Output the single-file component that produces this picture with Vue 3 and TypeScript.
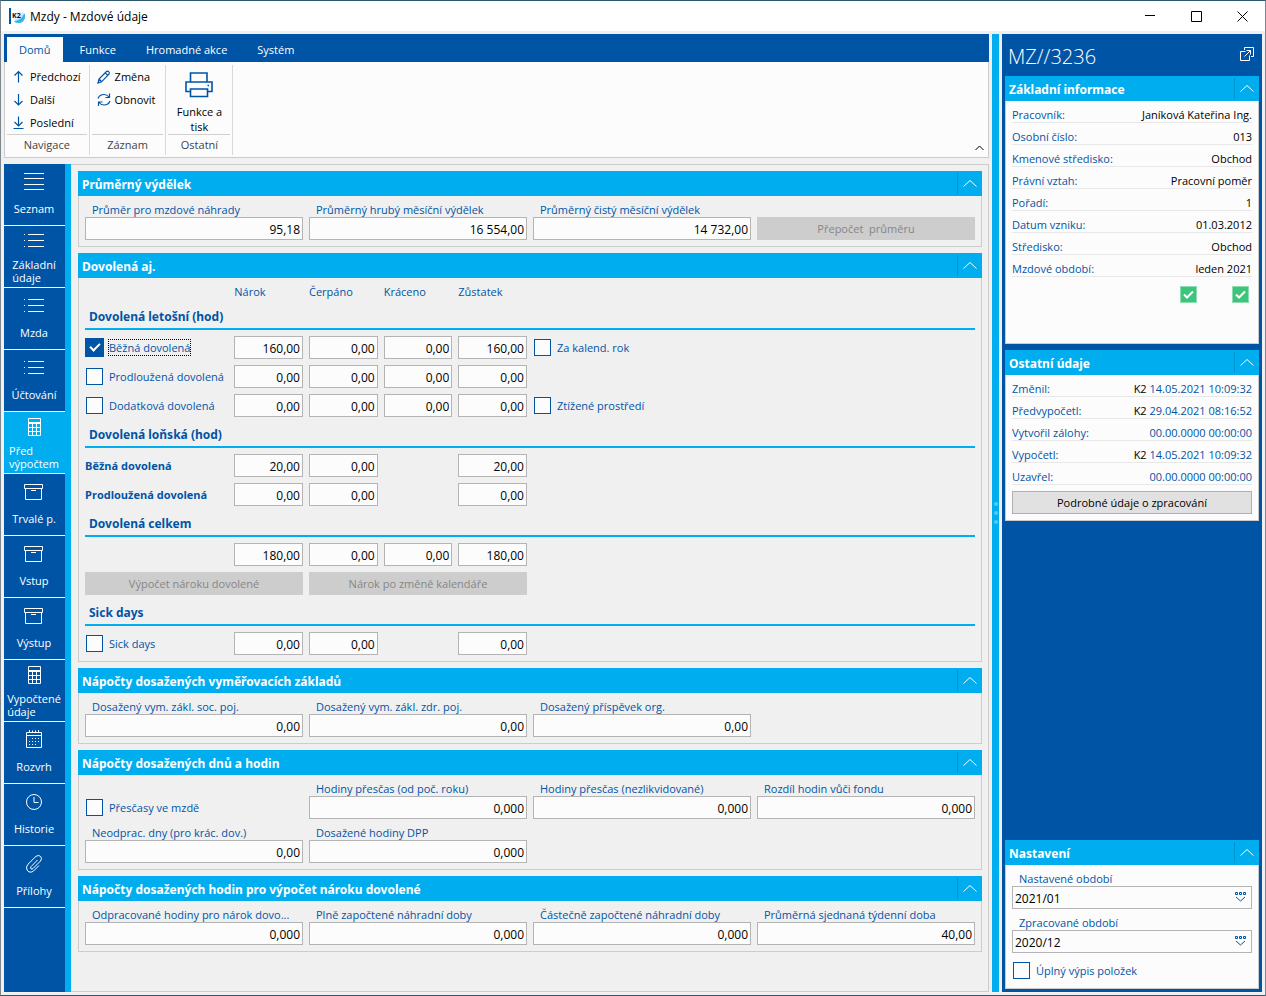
<script setup lang="ts">
import { ref } from 'vue'

interface Field { id: string; label: string; value: string }
interface Row {
  kind: 'heading' | 'values' | 'buttons'
  id: string
  label?: string
  check?: boolean
  checked?: boolean
  focused?: boolean
  values?: (string | null)[]
  extra?: string
  buttons?: string[]
}

const tabs = ['Domů', 'Funkce', 'Hromadné akce', 'Systém']

const navActions = [
  { label: 'Předchozí', icon: 'M6.5 12.5V1.5M2.5 5.5L6.5 1.5L10.5 5.5' },
  { label: 'Další', icon: 'M6.5 1V12M2.5 8L6.5 12L10.5 8' },
  { label: 'Poslední', icon: 'M6.5 0.5V9.5M2.5 6L6.5 10L10.5 6M1.5 12.5H11.5' },
]
const recordActions = [
  { label: 'Změna', icon: 'M1 13L2 9L9.5 1.5Q10.5 0.5 11.7 1.7T12 4.2L4.5 11.8ZM8.2 2.8L11 5.6M2 9L4.8 11.8' },
  { label: 'Obnovit', icon: 'M1 5.5Q2.5 1.5 7 1.5Q10 1.5 12 4M12.5 0.5V4.5H8.5M13 8Q11.5 12 7 12Q4 12 2 9.5M1.5 13V9H5.5' },
]

const icons: Record<string, string> = {
  lines: 'M0 1.5H20M0 6.5H20M0 12.5H20M0 17.5H20',
  list: 'M0 3.5H1M4 3.5H20M0 9.5H1M4 9.5H20M0 15.5H1M4 15.5H20',
  calc: 'M4.5 1.5H16.5V18.5H4.5ZM4.5 5.5H16.5M4.5 6.5H16.5M8.5 6.5V18.5M12.5 6.5V18.5M4.5 10.5H16.5M4.5 14.5H16.5',
  box: 'M0.5 2.5H18.5V6.5H0.5ZM1.5 6.5V17.5H17.5V6.5M7 8.5H12',
  calendar: 'M2.5 2.5H17.5V17.5H2.5ZM2.5 5.5H17.5M5.5 0V3M14.5 0V3M8.5 0.5V3M11.5 0.5V3M8 8.5H9M11 8.5H12M14 8.5H15M5 11.5H6M8 11.5H9M11 11.5H12M14 11.5H15M5 14.5H6M8 14.5H9M11 14.5H12',
  clock: 'M17.5 10A7.5 7.5 0 1 1 2.5 10A7.5 7.5 0 1 1 17.5 10M10 5V10.5H14.5',
  clip: 'M13.5 6L7 12.7Q6 14 7 14.8T9 14.5L16.5 7Q18.5 4.5 16.7 2.5T12 2.3L4 10.2Q1.5 13 3 16T7.8 18L9.5 17L15 11.5',
}

const sections = [
  { label: 'Seznam', icon: 'lines' },
  { label: 'Základní údaje', icon: 'list', tall: true },
  { label: 'Mzda', icon: 'list' },
  { label: 'Účtování', icon: 'list' },
  { label: 'Před výpočtem', icon: 'calc', tall: true, active: true },
  { label: 'Trvalé p.', icon: 'box' },
  { label: 'Vstup', icon: 'box' },
  { label: 'Výstup', icon: 'box' },
  { label: 'Vypočtené údaje', icon: 'calc', tall: true },
  { label: 'Rozvrh', icon: 'calendar' },
  { label: 'Historie', icon: 'clock' },
  { label: 'Přílohy', icon: 'clip' },
]

const averages: Field[] = [
  { id: 'avg-wage', label: 'Průměr pro mzdové náhrady', value: '95,18' },
  { id: 'avg-gross', label: 'Průměrný hrubý měsíční výdělek', value: '16 554,00' },
  { id: 'avg-net', label: 'Průměrný čistý měsíční výdělek', value: '14 732,00' },
]

const columns = ['Nárok', 'Čerpáno', 'Kráceno', 'Zůstatek']

const leave = ref<Row[]>([
  { kind: 'heading', id: 'h-now', label: 'Dovolená letošní (hod)' },
  { kind: 'values', id: 'now-regular', label: 'Běžná dovolená', check: true, checked: true, focused: true, values: ['160,00', '0,00', '0,00', '160,00'], extra: 'Za kalend. rok' },
  { kind: 'values', id: 'now-extended', label: 'Prodloužená dovolená', check: true, values: ['0,00', '0,00', '0,00', '0,00'] },
  { kind: 'values', id: 'now-additional', label: 'Dodatková dovolená', check: true, values: ['0,00', '0,00', '0,00', '0,00'], extra: 'Ztížené prostředí' },
  { kind: 'heading', id: 'h-last', label: 'Dovolená loňská (hod)' },
  { kind: 'values', id: 'last-regular', label: 'Běžná dovolená', values: ['20,00', '0,00', null, '20,00'] },
  { kind: 'values', id: 'last-extended', label: 'Prodloužená dovolená', values: ['0,00', '0,00', null, '0,00'] },
  { kind: 'heading', id: 'h-total', label: 'Dovolená celkem' },
  { kind: 'values', id: 'total', label: '', values: ['180,00', '0,00', '0,00', '180,00'] },
  { kind: 'buttons', id: 'leave-actions', buttons: ['Výpočet nároku dovolené', 'Nárok po změně kalendáře'] },
  { kind: 'heading', id: 'h-sick', label: 'Sick days' },
  { kind: 'values', id: 'sick', label: 'Sick days', check: true, values: ['0,00', '0,00', null, '0,00'] },
])

const bases: Field[] = [
  { id: 'base-social', label: 'Dosažený vym. zákl. soc. poj.', value: '0,00' },
  { id: 'base-health', label: 'Dosažený vym. zákl. zdr. poj.', value: '0,00' },
  { id: 'base-org', label: 'Dosažený příspěvek org.', value: '0,00' },
]
const hours: Field[] = [
  { id: 'ot-year', label: 'Hodiny přesčas (od poč. roku)', value: '0,000' },
  { id: 'ot-open', label: 'Hodiny přesčas (nezlikvidované)', value: '0,000' },
  { id: 'fund-diff', label: 'Rozdíl hodin vůči fondu', value: '0,000' },
  { id: 'missed', label: 'Neodprac. dny (pro krác. dov.)', value: '0,00' },
  { id: 'dpp', label: 'Dosažené hodiny DPP', value: '0,000' },
]
const entitlement: Field[] = [
  { id: 'worked', label: 'Odpracované hodiny pro nárok dovo...', value: '0,000' },
  { id: 'full-sub', label: 'Plně započtené náhradní doby', value: '0,000' },
  { id: 'part-sub', label: 'Částečně započtené náhradní doby', value: '0,000' },
  { id: 'weekly', label: 'Průměrná sjednaná týdenní doba', value: '40,00' },
]

const basicInfo = [
  ['Pracovník:', 'Janíková Kateřina Ing.'],
  ['Osobní číslo:', '013'],
  ['Kmenové středisko:', 'Obchod'],
  ['Právní vztah:', 'Pracovní poměr'],
  ['Pořadí:', '1'],
  ['Datum vzniku:', '01.03.2012'],
  ['Středisko:', 'Obchod'],
  ['Mzdové období:', 'leden 2021'],
]
const otherInfo = [
  ['Změnil:', 'K2', '14.05.2021 10:09:32'],
  ['Předvypočetl:', 'K2', '29.04.2021 08:16:52'],
  ['Vytvořil zálohy:', '', '00.00.0000 00:00:00'],
  ['Vypočetl:', 'K2', '14.05.2021 10:09:32'],
  ['Uzavřel:', '', '00.00.0000 00:00:00'],
]
const periods = [
  { id: 'period-set', label: 'Nastavené období', value: '2021/01' },
  { id: 'period-done', label: 'Zpracované období', value: '2020/12' },
]
const chevron = 'M0.5 7.5L7 1.5L13.5 7.5'
</script>

<template>
  <div class="window">
    <header class="titlebar">
      <svg class="logo" width="17" height="16" viewBox="0 0 17 16">
        <defs>
          <linearGradient id="orb" x1="0" y1="0" x2="1" y2="1">
            <stop offset="0" stop-color="#ffffff" />
            <stop offset="0.5" stop-color="#d9eefa" />
            <stop offset="1" stop-color="#1593dc" />
          </linearGradient>
        </defs>
        <rect width="2" height="16" fill="#0054a6" />
        <circle cx="10" cy="9" r="6" fill="url(#orb)" />
        <path d="M15.500 5Q17.500 11 12 14.500Q7 16 5 13Q12.500 13 15.500 5Z" fill="#35b5ea" />
        <text x="3" y="10" class="logo-text">K2</text>
      </svg>
      <h1>Mzdy - Mzdové údaje</h1>
      <div class="controls">
        <button type="button" aria-label="Minimalizovat"><svg width="11" height="11"><path d="M0 4.500H10" /></svg></button>
        <button type="button" aria-label="Maximalizovat"><svg width="11" height="11"><path d="M0.500 0.500H10.500V10.500H0.500Z" /></svg></button>
        <button type="button" aria-label="Zavřít"><svg width="11" height="11"><path d="M0.500 0.500L10.500 10.500M10.500 0.500L0.500 10.500" /></svg></button>
      </div>
    </header>

    <div class="workspace">
      <div class="left">
        <nav class="tabs">
          <button v-for="(t, i) in tabs" :key="t" type="button" :class="{ active: i === 0 }">{{ t }}</button>
        </nav>
        <div class="ribbon">
          <div class="group">
            <div class="actions">
              <button v-for="a in navActions" :key="a.label" type="button" class="action">
                <svg width="14" height="14" viewBox="0 0 14 14"><path :d="a.icon" /></svg>{{ a.label }}
              </button>
            </div>
            <div class="caption">Navigace</div>
          </div>
          <div class="group">
            <div class="actions wide">
              <button v-for="a in recordActions" :key="a.label" type="button" class="action">
                <svg width="14" height="14" viewBox="0 0 14 14"><path :d="a.icon" /></svg>{{ a.label }}
              </button>
            </div>
            <div class="caption">Záznam</div>
          </div>
          <div class="group">
            <button type="button" class="big-action">
              <svg width="28" height="26" viewBox="0 0 28 26">
                <path d="M5.500 10V1H22V10M5.500 19.500H1V10H27V19.500H22.500M5.500 17H22.500V24.500H5.500Z" />
                <path d="M22.500 13.500H24" />
              </svg>
              <span>Funkce a tisk</span>
            </button>
            <div class="caption">Ostatní</div>
          </div>
          <button type="button" class="fold" aria-label="Sbalit pás">
            <svg width="9" height="6"><path d="M0.500 5L4.500 1L8.500 5" /></svg>
          </button>
        </div>

        <div class="body">
          <nav class="sidebar">
            <button v-for="s in sections" :key="s.label" type="button" :class="{ tall: s.tall, active: s.active }">
              <svg width="20" height="20" viewBox="0 0 20 20"><path :d="icons[s.icon]" /></svg>
              <span>{{ s.label }}</span>
            </button>
          </nav>

          <main class="content">
            <section class="panel">
              <header><h2>Průměrný výdělek</h2><button type="button" aria-label="Sbalit"><svg width="14" height="9"><path :d="chevron" /></svg></button></header>
              <div class="quarters">
                <div v-for="f in averages" :key="f.id" class="field">
                  <label :for="f.id">{{ f.label }}</label><input :id="f.id" type="text" :value="f.value">
                </div>
                <button type="button" class="command" disabled>Přepočet&nbsp; průměru</button>
              </div>
            </section>

            <section class="panel">
              <header><h2>Dovolená aj.</h2><button type="button" aria-label="Sbalit"><svg width="14" height="9"><path :d="chevron" /></svg></button></header>
              <div class="leave">
                <div class="row titles">
                  <span class="lead"></span>
                  <span v-for="c in columns" :key="c">{{ c }}</span>
                </div>
                <template v-for="r in leave" :key="r.id">
                  <h3 v-if="r.kind === 'heading'">{{ r.label }}</h3>
                  <div v-else-if="r.kind === 'buttons'" class="row">
                    <button v-for="b in r.buttons" :key="b" type="button" class="command third" disabled>{{ b }}</button>
                  </div>
                  <div v-else class="row">
                    <label v-if="r.check" class="lead tick">
                      <input v-model="r.checked" type="checkbox"><span :class="{ focused: r.focused }">{{ r.label }}</span>
                    </label>
                    <strong v-else class="lead">{{ r.label }}</strong>
                    <template v-for="(v, i) in r.values" :key="i">
                      <span v-if="v === null"></span>
                      <input v-else type="text" :value="v" :aria-label="(r.label || 'Dovolená celkem') + ' – ' + columns[i]">
                    </template>
                    <label v-if="r.extra" class="tick third"><input type="checkbox"><span>{{ r.extra }}</span></label>
                  </div>
                </template>
              </div>
            </section>

            <section class="panel">
              <header><h2>Nápočty dosažených vyměřovacích základů</h2><button type="button" aria-label="Sbalit"><svg width="14" height="9"><path :d="chevron" /></svg></button></header>
              <div class="quarters">
                <div v-for="f in bases" :key="f.id" class="field">
                  <label :for="f.id">{{ f.label }}</label><input :id="f.id" type="text" :value="f.value">
                </div>
              </div>
            </section>

            <section class="panel">
              <header><h2>Nápočty dosažených dnů a hodin</h2><button type="button" aria-label="Sbalit"><svg width="14" height="9"><path :d="chevron" /></svg></button></header>
              <div class="quarters">
                <label class="tick"><input type="checkbox"><span>Přesčasy ve mzdě</span></label>
                <div v-for="f in hours" :key="f.id" class="field">
                  <label :for="f.id">{{ f.label }}</label><input :id="f.id" type="text" :value="f.value">
                </div>
              </div>
            </section>

            <section class="panel">
              <header><h2>Nápočty dosažených hodin pro výpočet nároku dovolené</h2><button type="button" aria-label="Sbalit"><svg width="14" height="9"><path :d="chevron" /></svg></button></header>
              <div class="quarters">
                <div v-for="f in entitlement" :key="f.id" class="field">
                  <label :for="f.id">{{ f.label }}</label><input :id="f.id" type="text" :value="f.value">
                </div>
              </div>
            </section>
          </main>
        </div>
      </div>

      <div class="splitter"><i></i><i></i><i></i></div>

      <aside class="detail">
        <div class="record">
          <h2>MZ//3236</h2>
          <button type="button" aria-label="Otevřít v okně">
            <svg width="14" height="14" viewBox="0 0 14 14"><path d="M4.500 3V0.500H13.500V9.500H11M5.500 4.500H0.500V13.500H9.500V8.500M4.500 9.500L10.500 3.500M6.500 3.500H10.500V7.500" /></svg>
          </button>
        </div>
        <section class="panel basic">
          <header><h2>Základní informace</h2><button type="button" aria-label="Sbalit"><svg width="14" height="9"><path :d="chevron" /></svg></button></header>
          <dl>
            <div v-for="r in basicInfo" :key="r[0]"><dt>{{ r[0] }}</dt><dd>{{ r[1] }}</dd></div>
          </dl>
          <div class="flags">
            <svg v-for="n in 2" :key="n" width="17" height="17" viewBox="0 0 17 17"><rect x="0.500" y="0.500" width="16" height="16" /><path d="M4 8.500L7 11.500L13 5.500" /></svg>
          </div>
        </section>
        <section class="panel">
          <header><h2>Ostatní údaje</h2><button type="button" aria-label="Sbalit"><svg width="14" height="9"><path :d="chevron" /></svg></button></header>
          <dl>
            <div v-for="r in otherInfo" :key="r[0]"><dt>{{ r[0] }}</dt><dd>{{ r[1] }} <time>{{ r[2] }}</time></dd></div>
          </dl>
          <button type="button" class="more">Podrobné údaje o zpracování</button>
        </section>
        <section class="panel settings">
          <header><h2>Nastavení</h2><button type="button" aria-label="Sbalit"><svg width="14" height="9"><path :d="chevron" /></svg></button></header>
          <div class="stack">
            <div v-for="p in periods" :key="p.id" class="field">
              <label :for="p.id">{{ p.label }}</label>
              <div class="picker">
                <select :id="p.id"><option>{{ p.value }}</option></select>
                <svg width="12" height="10" viewBox="0 0 12 10"><path d="M0.500 0.500H2.500V2.500H0.500ZM4.500 0.500H6.500V2.500H4.500ZM8.500 0.500H10.500V2.500H8.500ZM1 5L5.500 9L10 5" /></svg>
              </div>
            </div>
            <label class="tick"><input type="checkbox"><span>Úplný výpis položek</span></label>
          </div>
        </section>
      </aside>
    </div>
  </div>
</template>

<style>
body { margin: 0; }
</style>

<style scoped>
.window {
  --blue: #0054a6;
  --cyan: #00adef;
  --line: #cccccc;
  box-sizing: border-box;
  min-height: 100vh;
  display: flex;
  flex-direction: column;
  border: 1px solid #7d868b;
  border-top-color: #2b566b;
  border-bottom-color: #2b566b;
  background: #f0f0f0;
  color: #000;
  font-family: "Open Sans", "Noto Sans", sans-serif;
  font-size: 12px;
  line-height: 15px;
}
.window *, .window *::after { box-sizing: border-box; }
h1, h2, h3, dl, dd { margin: 0; font-size: inherit; font-weight: inherit; }
button, input, select { font: inherit; color: inherit; margin: 0; padding: 0; border: 0; border-radius: 0; background: none; }
svg { display: block; flex: none; fill: none; stroke: currentColor; }

.titlebar { height: 30px; display: flex; align-items: center; padding-left: 8px; gap: 4px; background: #fff; }
.logo { stroke: none; }
.logo-text { font: bold 7px "Open Sans", sans-serif; fill: #111; stroke: none; }
.controls { margin-left: auto; display: flex; }
.controls button { width: 46px; height: 28px; display: grid; place-items: center; }

.workspace { flex: 1; display: flex; padding: 3px; }
.left { flex: 1; min-width: 0; display: flex; flex-direction: column; }
.tabs { height: 28px; display: flex; padding: 3px 3px 0; background: var(--blue); }
.tabs button { padding: 0 15px; color: #fff; font-size: 11px; }
.tabs button.active { margin-right: 2px; padding: 0 12px; background: #fcfcfc; color: var(--blue); }
.ribbon { display: flex; height: 96px; padding: 3px 0 2px 2px; border: 1px solid var(--line); border-top: 0; background: #fcfcfc; }
.group { display: flex; flex-direction: column; padding-right: 2px; margin-right: 2px; border-right: 1px solid #d8d8d8; }
.actions { display: flex; flex-direction: column; padding: 0 6px 0 5px; flex: 1; }
.actions.wide { padding-right: 8px; }
.action { height: 23px; display: flex; align-items: center; gap: 4px; white-space: nowrap; font-size: 11px; }
.action svg { color: var(--blue); stroke-width: 1.2; }
.big-action svg { color: var(--blue); stroke-width: 1.6; }
.big-action { flex: 1; width: 62px; display: flex; flex-direction: column; align-items: center; gap: 6px; padding-top: 7px; font-size: 11px; }
.big-action span { width: 52px; }
.caption { height: 21px; border-top: 1px solid #d0d0d0; text-align: center; line-height: 20px; font-size: 11px; color: #444; }
.fold { align-self: flex-end; margin-left: auto; padding: 4px; }

.body { flex: 1; display: flex; margin-top: 6px; }
.sidebar { width: 67px; background: var(--blue); border-right: 6px solid var(--cyan); }
.sidebar button { width: 100%; height: 62px; display: flex; flex-direction: column; align-items: center; gap: 10px; padding: 8px 1px 0 0; border-bottom: 1px solid #fff; color: #fff; font-size: 11px; line-height: 13px; }
.sidebar button.tall { gap: 7px; padding-top: 5px; }
.sidebar .tall span { width: min-content; text-align: left; }
.sidebar button.active { background: var(--cyan); }
.content { flex: 1; min-width: 0; display: flex; flex-direction: column; gap: 6px; padding: 6px 6px 6px 7px; border: 1px solid var(--line); border-left: 0; }

.panel { border: 1px solid var(--line); border-top: 0; }
.panel > header { height: 25px; margin: 0 -1px; display: flex; align-items: center; padding: 2px 0 2px 4px; background: var(--cyan); color: #fff; }
.panel > header h2 { flex: 1; padding-top: 2px; font-family: "Noto Sans", sans-serif; font-weight: 700; font-size: 12px; }
.panel > header button { width: 25px; height: 21px; display: grid; place-items: center; border-left: 1px solid #0092cf; }
.quarters { display: grid; grid-template-columns: repeat(4, minmax(0, 1fr)); gap: 6px; padding: 6px; }
.field { display: flex; flex-direction: column; min-width: 0; }
.field label { padding-left: 7px; color: var(--blue); font-size: 11px; overflow: hidden; text-overflow: ellipsis; white-space: nowrap; }
input[type="text"] { width: 100%; min-width: 0; height: 23px; padding: 2px 2px 0; border: 1px solid #b4b4b4; background: #fcfcfc; text-align: right; }
.command { align-self: end; height: 23px; background: #cdcdcd; color: #868686; font-size: 11px; }
.leave { display: flex; flex-direction: column; gap: 6px; padding: 6px; font-size: 12px; }
.row { display: grid; grid-template-columns: repeat(12, minmax(0, 1fr)); gap: 6px; min-height: 23px; align-items: center; }
.row.titles { min-height: 15px; color: var(--blue); font-size: 11px; }
.lead { grid-column: span 2; white-space: nowrap; color: var(--blue); font-size: 11px; }
.third { grid-column: span 3; }
h3 { height: 25px; padding-left: 4px; border-bottom: 2px solid var(--cyan); line-height: 24px; font-family: "Noto Sans", sans-serif; font-weight: 700; font-size: 12px; color: var(--blue); }
.tick { align-self: end; height: 23px; display: flex; align-items: center; gap: 6px; padding-left: 1px; white-space: nowrap; color: var(--blue); font-size: 11px; }
.tick input { appearance: none; flex: none; width: 17px; height: 17px; display: grid; place-items: center; border: 1px solid var(--blue); background: #fcfcfc; }
.tick input:checked { background: var(--blue); box-shadow: 0 0 0 1px var(--blue); }
.tick input:checked::after { content: ""; width: 10px; height: 6px; border: solid #fff; border-width: 0 0 2px 2px; transform: translateY(-2px) rotate(-45deg); }
.focused { outline: 1px dotted #000; }

.splitter { width: 7px; margin: 0 3px; display: flex; flex-direction: column; align-items: center; justify-content: center; gap: 5px; background: var(--cyan); }
.splitter i { width: 4px; height: 4px; border-radius: 50%; background: #55c8f5; }

.detail { width: 260px; display: flex; flex-direction: column; gap: 6px; padding: 3px; background: var(--blue); }
.record { height: 33px; display: flex; align-items: center; justify-content: space-between; padding: 6px 5px 0 3px; color: #fff; }
.record h2 { font-size: 20px; line-height: 24px; font-weight: 300; }
.record button { align-self: flex-start; padding-top: 4px; }
.detail .panel { background: #fcfcfc; }
.basic { min-height: 268px; }
dl { padding: 0 6px; font-size: 11px; }
dl div { height: 22px; display: flex; justify-content: space-between; align-items: center; padding-top: 5px; border-bottom: 1px solid #e8e8e8; }
dt, time { color: var(--blue); }
.flags { display: flex; justify-content: flex-end; gap: 35px; padding: 9px 9px; }
.flags svg { stroke: #fff; }
.flags rect { fill: #3ec57c; stroke: #8fdcb2; }
.flags path { stroke-width: 2; }
.more { display: block; width: 240px; max-width: 100%; height: 23px; margin: 6px; border: 1px solid #b0b0b0; background: #e1e1e1; font-size: 11px; }
.settings { margin-top: auto; }
.stack { display: flex; flex-direction: column; gap: 6px; padding: 6px; }
.stack .tick { align-self: flex-start; }
.picker { position: relative; }
.picker select { width: 100%; height: 23px; padding: 2px 2px 0; appearance: none; border: 1px solid #b4b4b4; background: #fcfcfc; }
.picker svg { position: absolute; right: 5px; top: 6px; color: var(--blue); pointer-events: none; }
</style>
